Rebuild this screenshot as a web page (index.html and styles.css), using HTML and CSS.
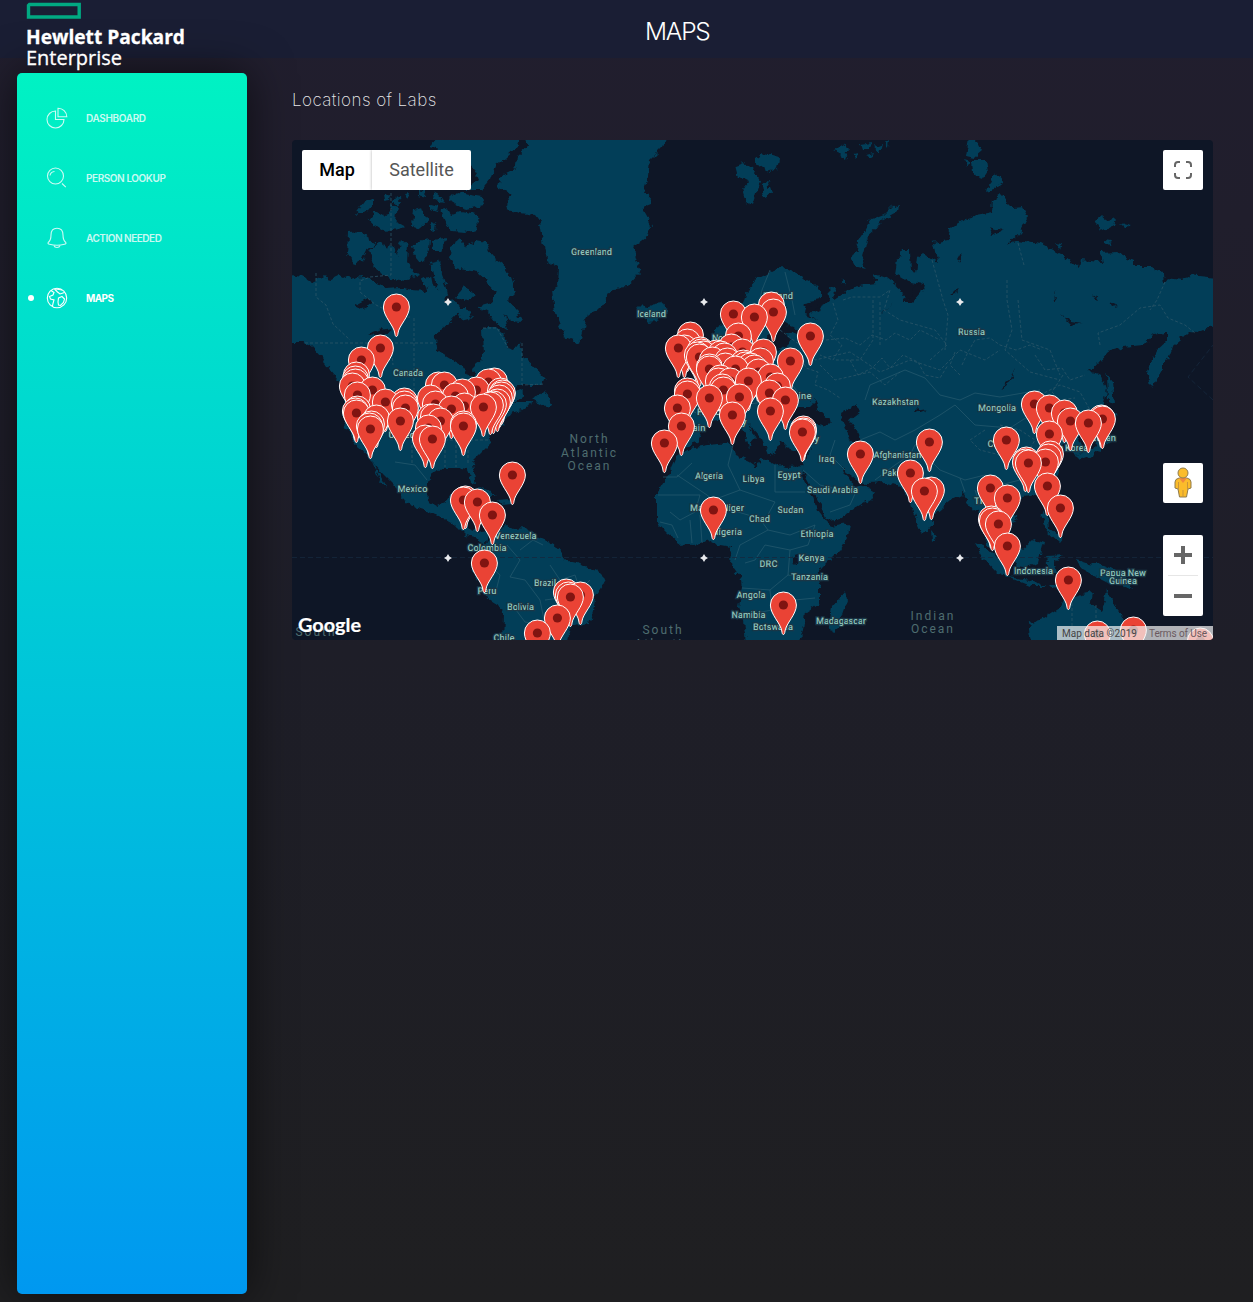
FILE: index.html
```html
<!DOCTYPE html>
<html lang="en">
<head>
<meta charset="utf-8">
<title>Maps</title>
<link rel="stylesheet" href="styles.css">
</head>
<body>
<header class="topbar">
  <svg class="logo" width="180" height="72" viewBox="0 0 180 72">
    <path d="M3.500 4.500H53.200V17H2.500V5.500Z" fill="none" stroke="#01a982" stroke-width="3.400"/>
    <text class="logo-bold" x="0" y="44" textLength="159" lengthAdjust="spacingAndGlyphs">Hewlett Packard</text>
    <text class="logo-regular" x="0" y="65" textLength="96" lengthAdjust="spacingAndGlyphs">Enterprise</text>
  </svg>
  <h1 class="title">MAPS</h1>
</header>
<div class="layout">
  <nav class="sidebar">
    <a class="item"><svg class="icon" viewBox="0 0 22 22"><path d="M9.500 4A8.500 8.500 0 1 0 18 12.500H9.500ZM12 1.200V9.800H20.800A8.800 8.800 0 0 0 12 1.200Z"/></svg><span class="w-dash">DASHBOARD</span></a>
    <a class="item"><svg class="icon" viewBox="0 0 22 22"><circle cx="9.500" cy="9" r="8"/><path d="M4 8.500A5 5 0 0 1 8.500 4.500M16 16.500L19.800 20.200"/></svg><span class="w-person">PERSON LOOKUP</span></a>
    <a class="item"><svg class="icon" viewBox="0 0 22 22"><path d="M11 1.200C7 1.200 5 4 5 8C5 12 4 14 2.200 15.500Q1.500 17 3.500 17.200Q11 19.200 18.500 17.200Q20.500 17 19.800 15.500C18 14 17 12 17 8C17 4 15 1.200 11 1.200ZM8 18.500Q8.500 20.500 11 20.500Q13.500 20.500 14 18.500"/></svg><span class="w-action">ACTION NEEDED</span></a>
    <a class="item active"><svg class="icon" viewBox="0 0 22 22"><circle cx="11" cy="11" r="9.700"/><path d="M5 3.500L8 5.500L7 8L3.500 9.500L4.500 12L8 13L7 16.500L6.500 19M8.500 2L11.500 5L14 7L18.500 5.500M10 2L16 3M12.500 11L16 9.500L18.500 12L17.500 15.500L14.500 18.500L12.500 18L12 15Z"/></svg><span class="w-maps">MAPS</span></a>
  </nav>
  <main class="content">
    <h2 class="subtitle">Locations of Labs</h2>
    <section class="map">
      <svg class="canvas" viewBox="292 140 921 500" width="921" height="500">
        <defs>
          <filter id="coast" x="0" y="0" width="100%" height="100%" color-interpolation-filters="sRGB"><feTurbulence type="fractalNoise" baseFrequency=".13" numOctaves="3" seed="4"/><feDisplacementMap in="SourceGraphic" scale="8" xChannelSelector="R" yChannelSelector="G"/></filter>
          <g id="pin"><path d="M0 29.500C-1 29.500-1.400 28-1.600 26C-2.600 18.500-13 9.500-13 0A13 13 0 0 1 13 0C13 9.500 2.600 18.500 1.600 26C1.400 28 1 29.500 0 29.500Z" fill="#ea4335" stroke="#fff"/><circle r="4.600" fill="#811411"/></g>
          <path id="star" d="M0-4L1.500-1.500L4 0L1.500 1.500L0 4L-1.500 1.500L-4 0L-1.500-1.500Z" fill="#e8eaed"/>
        </defs>
        <rect x="292" y="140" width="921" height="500" fill="#0e1626"/>
        <g fill="#023e58" filter="url(#coast)">
          <!-- North America -->
          <path d="M280 272L302 276L312 282L322 277L330 279L340 274L350 279L362 276L372 281L385 288L400 287L412 290L425 291L432 284L438 290L441 270L446 284L448 294L443 302L454 300L462 310L453 320L443 327L436 335L435 343L440 352L453 360L463 366L470 377L474 378L472 368L477 363L483 358L482 328L497 328L503 333L508 348L514 350L520 342L523 357L532 364L545 378L542 385L520 385L508 393L522 389L524 396L514 402L534 402L523 410L510 413L503 423L490 433L488 447L472 463L476 483L472 482L467 470L457 468L443 468L433 473L427 482L427 493L428 502L437 507L445 503L450 495L459 494L456 510L466 513L468 527L480 532L488 531L484 547L479 539L467 536L457 526L443 518L430 512L416 508L405 502L399 490L383 474L372 462L380 474L388 489L379 479L370 458L358 447L345 427L343 410L346 390L338 380L330 370L322 357L312 346L303 343L280 343Z"/>
          <!-- Newfoundland, Cuba, Hispaniola -->
          <path d="M533 399L544 390L553 404L545 406ZM467 489L480 487L496 495L486 495ZM497 500L510 499L514 504L500 505Z"/>
          <!-- South America -->
          <path d="M483 547L495 532L507 525L513 528L525 527L533 535L543 540L555 545L562 553L563 560L577 563L587 568L600 573L605 578L603 585L595 597L593 613L590 622L570 628L565 650L503 650L504 610L488 600L485 590L475 577L472 563L477 557Z"/>
          <!-- Greenland and Iceland -->
          <path d="M522 130L528 146L518 155L517 165L512 172L500 178L498 187L513 194L506 203L507 210L520 213L535 215L540 222L543 240L547 260L558 267L557 287L552 290L555 313L565 337L580 343L588 313L602 307L612 288L627 287L640 273L633 247L647 237L652 225L642 207L652 203L643 193L648 177L650 160L662 148L670 130ZM637 307L641 303L646 308L655 303L662 302L667 312L659 320L650 322L640 318Z"/>
          <!-- Canadian Arctic islands -->
          <path d="M438 130L430 147L442 150L460 156L472 166L478 180L465 190L482 190L490 180L495 166L505 158L520 144L516 130ZM440 210L448 208L452 215L460 212L477 215L478 230L465 232L450 231ZM430 204L438 206L437 212L430 210ZM450 200L458 192L482 196L484 206L466 210ZM348 233L360 232L376 244L367 250L362 260L354 265L347 256ZM370 250L380 242L388 248L390 243L396 255L402 240L408 245L407 263L418 275L405 281L390 278L376 270ZM355 214L364 202L374 198L374 207L364 214ZM369 220L375 211L384 216L391 206L398 208L396 222L405 227L386 232ZM414 210L422 208L427 222L420 228L412 225ZM432 222L437 224L436 231L430 230ZM412 246L422 241L430 240L428 258L421 263L413 253ZM432 240L446 238L442 250L433 250ZM430 262L438 260L443 272L441 290L434 280ZM422 278L430 276L432 286L425 288ZM383 194L391 193L390 199L384 200ZM404 193L409 192L408 199ZM418 190L426 192L425 198L418 196ZM432 192L440 196L444 202L434 200ZM395 196L401 201L398 207L393 203Z"/>
          <path d="M450 246L460 240L466 246L475 241L486 243L492 256L503 264L511 278L516 292L508 300L517 310L521 322L510 321L505 314L508 330L495 322L488 312L478 306L492 302L497 292L488 282L477 272L465 270L456 268L449 258ZM456 296L465 284L474 296L466 302ZM458 309L466 309L473 318L462 321Z"/>
          <!-- Svalbard, Franz Josef Land, Novaya Zemlya and Siberian islands -->
          <path d="M735 166L743 163L752 166L760 180L757 190L752 206L747 203L743 190L748 183L738 178ZM755 158L762 153L780 158L778 168L770 172L760 165ZM763 185L768 183L772 194L765 198ZM834 151L845 145L850 147L843 155ZM860 144L872 142L870 150L862 150ZM866 155L874 153L872 158ZM874 147L882 144L880 152ZM884 143L889 140L888 148ZM839 155L847 153L845 159ZM853 154L858 153L857 158ZM899 204L898 211L882 220L876 229L866 238L864 250L862 257L867 269L855 266L851 259L857 250L858 240L865 230L871 220L884 215L893 206ZM970 130L982 152L975 158L966 156ZM972 160L986 160L988 172L984 178L973 174ZM995 171L1004 182L994 189L987 191ZM963 160L970 162L967 167ZM1095 222L1102 216L1108 220L1116 218L1114 227L1100 231ZM1120 223L1132 226L1126 229ZM1105 240L1112 241L1110 245L1104 243ZM1055 243L1062 244L1060 249ZM841 282L846 279L846 285Z"/>
          <!-- Eurasia -->
          <path d="M747 290L757 279L775 270L782 267L793 272L810 280L820 290L820 299L806 302L806 308L817 312L820 307L830 302L828 288L835 290L834 299L843 293L858 285L877 283L871 273L887 278L900 288L908 302L918 296L920 285L912 283L895 273L897 260L902 250L910 250L911 270L915 275L917 257L923 253L937 262L933 243L948 240L950 228L967 218L977 215L992 212L993 200L1000 195L1005 200L1013 208L1022 207L1028 218L1020 233L1007 245L1018 240L1040 243L1063 255L1078 268L1080 260L1102 262L1100 253L1117 252L1133 260L1133 267L1152 267L1162 273L1163 283L1167 278L1182 280L1190 275L1225 279L1225 327L1209 328L1197 333L1188 332L1180 340L1174 345L1168 360L1160 373L1150 388L1147 370L1157 350L1166 342L1166 332L1153 334L1143 345L1123 347L1108 352L1090 372L1102 375L1107 390L1103 407L1090 425L1078 440L1084 452L1076 456L1068 443L1058 447L1053 447L1061 457L1056 475L1048 488L1030 496L1017 498L1008 505L1016 518L1010 532L1000 528L990 520L990 538L1000 556L990 548L982 528L978 512L972 510L963 493L950 500L933 515L932 525L923 535L915 517L911 500L900 487L887 483L867 484L856 479L842 468L850 482L856 487L863 485L875 492L870 500L840 518L827 521L820 503L803 472L806 456L812 450L800 452L787 447L780 440L777 452L768 455L762 440L748 423L755 438L748 446L745 435L735 422L725 418L712 420L703 430L697 443L685 447L675 443L673 404L690 400L692 390L686 386L702 378L712 367L724 358L722 350L712 340L714 330L730 319L743 303Z"/>
          <path d="M690 352L700 350L703 366L712 374L694 380L697 364ZM680 358L690 358L688 372L678 374ZM1107 374L1112 380L1114 405L1108 402ZM1106 408L1118 415L1108 422ZM1107 424L1110 442L1094 455L1080 460L1076 456L1093 448ZM931 530L937 537L932 541Z"/>
          <!-- Africa and Madagascar -->
          <path d="M677 456L690 448L707 445L730 443L735 455L750 462L757 467L763 458L773 463L787 467L805 466L802 477L813 497L817 510L827 523L830 527L849 524L847 537L840 550L822 568L817 577L820 587L820 603L805 613L803 630L798 650L747 650L743 620L738 607L742 587L740 577L730 563L732 547L720 545L710 540L700 543L682 545L667 533L657 523L657 493L670 472ZM845 592L847 600L838 626L831 632L829 624L832 607Z"/>
          <!-- South-east Asia and Australia -->
          <path d="M975 543L985 547L1010 568L1008 577L997 572L983 557ZM1008 577L1030 580L1046 586L1030 586ZM1013 557L1022 550L1033 540L1043 543L1038 563L1030 567L1017 565ZM1046 556L1065 555L1054 561L1057 572L1048 572ZM1040 514L1046 510L1048 528L1064 538L1060 543L1048 532ZM1077 560L1087 563L1103 565L1120 572L1133 588L1120 584L1107 582L1093 575L1080 568ZM1050 585L1062 585L1055 590ZM1028 623L1043 618L1060 607L1070 597L1092 592L1090 603L1102 610L1107 590L1113 600L1117 610L1127 620L1134 650L1032 650Z"/>
        </g>
        <!-- Seas and lakes inside the land -->
        <g fill="#0e1626" filter="url(#coast)">
          <path d="M768 335L775 322L774 308L784 301L784 318L787 325L804 331L789 333L790 343L778 352L764 352L758 343ZM788 419L795 407L808 407L816 399L818 410L832 421L827 426L808 422L797 425ZM840 413L855 405L861 411L850 420L858 433L861 445L850 441L845 427ZM355 305L368 298L374 304L362 309ZM370 334L380 330L393 328L383 336ZM446 388L460 392L464 404L456 398ZM989 226L1003 230L993 236ZM880 316L892 303L886 310ZM1000 386L1010 380L1015 368L1012 380L1003 387ZM915 286L925 283L922 292L912 303L904 303ZM792 557L799 555L797 565L792 562ZM914 410L928 408L916 413Z"/>
          <path d="M806 302L818 306L810 315L816 319L804 315ZM957 262L962 253L963 260ZM1054 290L1057 302L1055 302ZM1060 314L1070 321L1082 323L1070 324ZM1109 302L1118 306L1112 307ZM1093 293L1098 301L1095 300ZM950 295L957 288L955 293Z"/>
        </g>
        <g class="borders">
          <path d="M391 193V275L370 277L360 281L360 292L376 305L386 310M316 273V297L326 305L333 324L350 340M305 343H435M391 343L393 365M414 318V410M410 317H390M483 328L497 328L508 348M522 343V385L545 384M370 410H444L470 402L505 402M370 425H400V445M412 405V463M430 440H488M445 440V467M456 440V467M468 450V463M350 405L390 407"/>
          <path d="M843 300L852 297H880L890 290L884 310L900 320L935 330L947 345L930 360M873 300V340L860 360H835M932 260L937 278L943 300L948 315L945 350M1018 243L1024 265M1007 280V300L1012 330L1005 350L1030 372L1060 380M1100 345L1098 333L1120 325L1140 308L1160 305L1168 318L1185 325L1195 333M880 345V300M780 330L800 345L815 360L850 352L880 372L910 360L940 370L960 350L985 360L1000 350M1018 300L1022 340L1050 350L1060 375M820 365L835 380L870 372L885 385L900 372M1040 395L1060 385L1080 392L1090 410M1072 603V640M1096 605V640"/>
          <path d="M833 303L838 320L830 335L842 345L833 360L820 355M826 340L845 338L860 345L872 335L886 340L895 333L910 340L920 330L940 340M850 360L858 375L872 368L882 358L890 368L903 355L918 362L925 375L940 378L948 365M800 355L806 368L818 372L815 385L828 390L840 398M962 365L968 352L975 340L990 338L1000 345L1016 350L1030 345L1042 350M1035 355L1045 370L1062 368L1070 380L1085 375M960 375L950 365L955 352M1165 282L1157 300L1150 310M1063 375L1052 392L1060 400L1075 398M985 430L970 440L980 450L1000 455L1010 468L1030 460M1000 425L1020 430L1035 440L1028 452"/>
        </g>
        <path class="lines" d="M395 462L415 465L427 480M455 512L463 522M507 545L520 560L510 577L525 580L540 600L545 625L525 622L510 602M520 550L533 540L543 545M550 565L560 580L575 575L580 590L590 580M545 600L560 598L565 610M484 560L500 575L495 595M677 475L707 495L713 500L740 490L775 502M733 445L728 465L740 490M775 465V492H805M692 463L677 477H663M658 495H700L695 512L680 520L670 512M660 522L672 525L678 538M690 520L692 543M700 515L702 543M700 512L720 505L738 512L765 520L775 502M757 515L768 530L740 545L735 560M768 530L790 535L815 525L808 545L790 550L765 545L755 560L745 563M790 550L788 575L770 590L742 588M788 575L815 580M770 590L772 610L745 615M772 610L795 600L815 598M803 470L820 485L840 490L858 487L850 505L830 512M835 440L830 455L845 470M865 400L870 385L905 370L925 378L940 395L960 400L975 393L1000 397L1040 390M860 440L880 432L895 440L915 430L940 415L955 405L975 425L1010 428L1035 412M875 480L895 465L910 455L915 445L935 435M920 450L940 470L965 480L985 475L1000 485L1020 480M960 478L965 492M975 490L980 505M690 410L707 418M707 385L740 390L765 380L790 382L800 395M740 405L765 402L780 410M755 350L780 362L790 380M770 270L762 290L755 320M785 272L792 300L795 315"/>
        <path class="equator" d="M292 557.500H1213M1213 400L1188 377L1213 345"/>
        <use href="#star" x="448" y="302"/><use href="#star" x="704" y="302"/><use href="#star" x="960" y="302"/><use href="#star" x="448" y="558"/><use href="#star" x="704" y="558"/><use href="#star" x="960" y="558"/>
        <g class="labels">
          <text x="591.500" y="254.500" textLength="41">Greenland</text><text x="651.500" y="316.500" textLength="29">Iceland</text><text x="778" y="298.500" textLength="30">Finland</text><text x="726.500" y="341" textLength="29">Norway</text><text x="971.500" y="334.500" textLength="27">Russia</text><text x="408" y="375.500" textLength="30">Canada</text><text x="416" y="438" textLength="55">United States</text><text x="412.500" y="491.500" textLength="30">Mexico</text><text x="895.500" y="404.500" textLength="47">Kazakhstan</text><text x="997" y="410.500" textLength="38">Mongolia</text><text x="1000" y="446.500" textLength="25">China</text><text x="1104" y="440.500" textLength="24">Japan</text><text x="1064" y="450.500" textLength="49">South Korea</text><text x="795" y="398.500" textLength="33">Ukraine</text><text x="711" y="414.500" textLength="28">France</text><text x="693.500" y="430.500" textLength="24">Spain</text><text x="738" y="424.500" textLength="17">Italy</text><text x="805" y="441.500" textLength="28">Turkey</text><text x="826.500" y="461.500" textLength="16">Iraq</text><text x="897.500" y="457.500" textLength="48">Afghanistan</text><text x="899" y="475.500" textLength="34">Pakistan</text><text x="832.500" y="492.500" textLength="51">Saudi Arabia</text><text x="709" y="478.500" textLength="28">Algeria</text><text x="753.500" y="481.500" textLength="22">Libya</text><text x="789" y="477.500" textLength="23">Egypt</text><text x="699" y="510.500" textLength="18">Mali</text><text x="733" y="510.500" textLength="22">Niger</text><text x="759.500" y="521.500" textLength="21">Chad</text><text x="790.500" y="512.500" textLength="26">Sudan</text><text x="727" y="534.500" textLength="30">Nigeria</text><text x="817" y="536.500" textLength="33">Ethiopia</text><text x="811.500" y="560.500" textLength="26">Kenya</text><text x="768.500" y="566.500" textLength="18">DRC</text><text x="809.500" y="579.500" textLength="37">Tanzania</text><text x="751" y="597.500" textLength="29">Angola</text><text x="748.500" y="617.500" textLength="34">Namibia</text><text x="773" y="629.500" textLength="40">Botswana</text><text x="841" y="623.500" textLength="50">Madagascar</text><text x="515.500" y="538.500" textLength="42">Venezuela</text><text x="487" y="550.500" textLength="39">Colombia</text><text x="487" y="593.500" textLength="19">Peru</text><text x="545" y="585.500" textLength="22">Brazil</text><text x="520.500" y="609.500" textLength="27">Bolivia</text><text x="504" y="640.500" textLength="21">Chile</text><text x="993" y="503.500" textLength="38">Thailand</text><text x="1033.500" y="573.500" textLength="39">Indonesia</text><text x="1123" y="575.500" textLength="46">Papua New</text><text x="1123" y="583.500" textLength="28">Guinea</text>
        </g>
        <g class="seas">
          <text x="588.500" y="443" textLength="38">North</text><text x="588.500" y="457" textLength="55">Atlantic</text><text x="588.500" y="470" textLength="42">Ocean</text><text x="662" y="634" textLength="39">South</text><text x="662" y="648" textLength="55">Atlantic</text><text x="932" y="620" textLength="43">Indian</text><text x="932" y="633" textLength="42">Ocean</text><text x="315" y="636" textLength="39">South</text>
        </g>
        <g id="pins"></g>
        <text class="google" x="298" y="632" textLength="63" lengthAdjust="spacingAndGlyphs">Google</text>
      </svg>
      <div class="maptype"><button class="on">Map</button><button>Satellite</button></div>
      <button class="ctl full"><svg width="18" height="18" viewBox="0 0 18 18"><path d="M1 6V4Q1 1 4 1H6M12 1H14Q17 1 17 4V6M17 12V14Q17 17 14 17H12M6 17H4Q1 17 1 14V12"/></svg></button>
      <button class="ctl man"><svg width="18" height="32" viewBox="0 0 18 32"><path d="M5 11Q1 12 1 15V21L4 22L5.500 30H12.500L14 22L17 21V15Q17 12 13 11Z" fill="#fbbc2b" stroke="#8f7b4d"/><path d="M5 11H13L9 16Z" fill="#f0883e"/><path d="M4.500 15V22M13.500 15V22M9 23V30" fill="none" stroke="#c9953a"/><circle cx="9" cy="6" r="5" fill="#fbbc2b" stroke="#8f7b4d"/></svg></button>
      <div class="zoom"><button><svg width="18" height="18" viewBox="0 0 18 18"><path d="M7 0H11V7H18V11H11V18H7V11H0V7H7Z"/></svg></button><button><svg width="18" height="18" viewBox="0 0 18 18"><path d="M0 7H18V11H0Z"/></svg></button></div>
      <div class="credit"><span>Map data ©2019</span><span>Terms of Use</span></div>
    </section>
  </main>
</div>
<script src="pins.js"></script>
</body>
</html>
```
FILE: styles.css
```css
* { box-sizing: border-box; }
body { margin: 0; height: 1302px; overflow: hidden; background: linear-gradient(#211e2e 0, #1e1e28 50%, #1f1f21 100%); font-family: Inter, sans-serif; color: #fff; }
button { border: 0; padding: 0; background: #fff; font-family: Roboto, sans-serif; }
.topbar { height: 58px; background: #1a1e34; display: flex; }
.logo { margin-left: 26px; flex: none; position: relative; z-index: 2; }
.logo text { fill: #fff; font-family: "Open Sans", sans-serif; font-size: 20px; }
.logo .logo-bold { font-weight: 700; stroke: #fff; stroke-width: .3px; }
.logo .logo-regular { stroke: #fff; stroke-width: .3px; }
.title { margin: 0 0 0 439px; font-size: 24.5px; line-height: 63px; font-weight: 300; letter-spacing: -1.2px; }
.layout { display: flex; align-items: flex-start; padding: 15px 40px 0 17px; gap: 45px; }
.sidebar { width: 230px; height: 1221px; flex: none; padding-top: 15px; border-radius: 5px; background: linear-gradient(#00f2c3, #0098f0); box-shadow: 0 0 45px rgba(0, 0, 0, .6); }
.item { height: 60px; padding-left: 29px; display: flex; align-items: center; gap: 18px; color: rgba(255, 255, 255, .8); font-size: 10px; font-weight: 600; position: relative; white-space: nowrap; }
.icon { width: 22px; height: 22px; fill: none; stroke: currentColor; stroke-width: 1.1; }
.item.active { color: #fff; font-weight: 700; }
.item.active::before { content: ""; position: absolute; left: 11px; top: 27px; width: 6px; height: 6px; border-radius: 50%; background: #fff; }
.w-dash { letter-spacing: -.35px; }
.w-person { letter-spacing: -.42px; }
.w-action { letter-spacing: -.48px; }
.w-maps { letter-spacing: -.6px; }
.content { width: 921px; padding-top: 15px; }
.subtitle { margin: 0 0 27px; height: 25px; line-height: 25px; font-size: 17px; font-weight: 200; letter-spacing: .43px; color: rgba(255, 255, 255, .9); }
.map { position: relative; width: 921px; height: 500px; border-radius: 4px; overflow: hidden; font-family: Roboto, sans-serif; }
.canvas { display: block; }
.borders, .equator { fill: none; stroke: #2b5668; stroke-width: .8; stroke-dasharray: 3 2; }
.lines { fill: none; stroke: #285b70; stroke-width: .7; }
.equator { stroke: #15283d; stroke-dasharray: 5 3; }
.labels text { font-size: 9.3px; font-weight: 500; fill: #8ec3b9; stroke: #1a3646; stroke-width: 2.5px; paint-order: stroke; text-anchor: middle; text-rendering: geometricPrecision; }
.seas text { font-size: 12px; fill: #4e6d70; text-anchor: middle; }
.google { font: 700 19px Lato, sans-serif; fill: #fff; stroke: #fff; stroke-width: .2px; }
.maptype { position: absolute; left: 10px; top: 10px; width: 169px; height: 40px; display: flex; border-radius: 2px; overflow: hidden; }
.maptype button { width: 99px; padding-bottom: 2px; font-size: 18px; color: #565656; box-shadow: 0 0 3px rgba(0, 0, 0, .3); }
.maptype .on { width: 70px; color: #000; font-weight: 500; box-shadow: none; }
.ctl { position: absolute; right: 10px; width: 40px; height: 40px; border-radius: 2px; display: flex; align-items: center; justify-content: center; }
.full { top: 10px; }
.full path { fill: none; stroke: #666; stroke-width: 2; }
.man { top: 323px; }
.zoom { position: absolute; right: 10px; top: 395px; width: 40px; height: 81px; padding: 0 5px; border-radius: 2px; background: #fff; }
.zoom button { width: 30px; height: 40px; display: flex; align-items: center; justify-content: center; fill: #666; }
.zoom button + button { border-top: 1px solid #e6e6e6; height: 41px; }
.credit { position: absolute; right: 0; bottom: 0; height: 14px; width: 156px; padding: 0 6px 0 5px; display: flex; justify-content: space-between; background: rgba(245, 245, 245, .7); color: #444; font-size: 10px; line-height: 15px; white-space: nowrap; }
.credit span + span { color: #6b5a60; letter-spacing: -.1px; }
```
FILE: pins.js
```js
// x,y of each lab's pin head
const labs = `396,307 380,348 361,360 356,375 355,379 355,382 352,386 372,390 357,395 357,409 355,411 356,413
376,418 371,424 369,426 370,429 385,402 404,401 404,404 405,408 400,421 438,385 444,385 430,398 435,404 462,392
455,396 451,409 464,406 476,390 488,382 494,381 500,391 502,393 501,395 499,398 497,402 493,404 490,405 483,407
440,421 430,417 433,417 428,428 425,438 432,439 463,424 463,426 512,475 465,499 463,500 477,502 492,515 484,563
566,592 568,595 570,597 580,595 557,618 537,633 733,314 771,305 754,317 773,312 810,336 690,335 687,342 684,348
678,348 738,336 790,361 700,350 701,352 697,355 699,357 703,354 716,353 720,354 724,356 712,360 727,361 731,347
742,352 763,352 760,361 709,367 709,369 725,366 735,369 745,365 750,366 754,368 758,372 743,363 720,378 718,381
730,381 748,381 770,377 777,386 722,387 723,390 687,391 687,394 709,398 739,397 677,408 732,415 769,393 770,411
785,400 681,426 664,443 803,429 803,431 802,432 929,442 860,454 910,473 931,490 924,491 1034,404 1049,408 1064,413
1070,421 1088,423 1101,418 1102,419 1049,434 1006,440 1050,454 1048,457 1045,462 1026,460 1025,462 1028,463
990,488 1007,498 1047,486 1060,508 991,519 992,521 998,524 1007,546 1068,580 1097,634 1133,630 1200,641
713,510 783,605`.split(/\s+/).map(p => p.split(',').map(Number));

// southern pins overlap northern ones
labs.sort((a, b) => a[1] - b[1]);
document.getElementById('pins').innerHTML = labs
  .map(([x, y]) => `<use href="#pin" x="${x + 0.4}" y="${y}"/>`)
  .join('');
```
